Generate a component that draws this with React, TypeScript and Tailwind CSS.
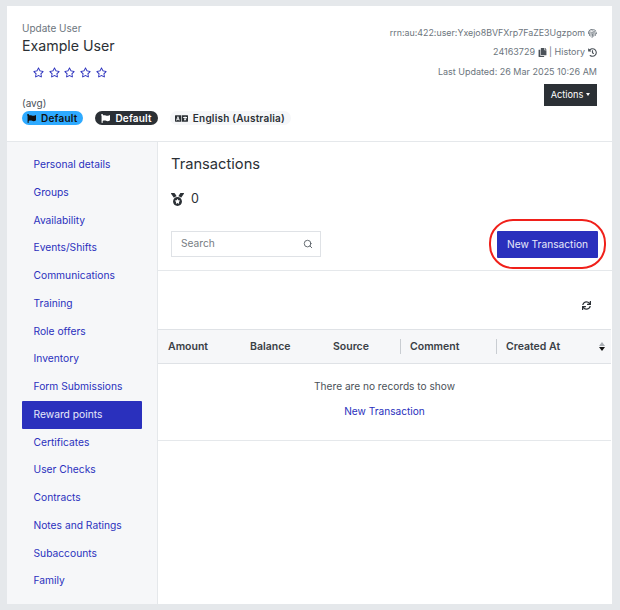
import {
  FaCopy,
  FaFingerprint,
  FaFlag,
  FaHistory,
  FaLanguage,
  FaMedal,
  FaRegStar,
  FaSync,
} from "react-icons/fa";
import { Search } from "lucide-react";

const navItems = [
  "Personal details",
  "Groups",
  "Availability",
  "Events/Shifts",
  "Communications",
  "Training",
  "Role offers",
  "Inventory",
  "Form Submissions",
  "Reward points",
  "Certificates",
  "User Checks",
  "Contracts",
  "Notes and Ratings",
  "Subaccounts",
  "Family",
];

function Header() {
  return (
    <header className="flex h-[136px] justify-between border-b border-[#e5e8eb] pl-[15px] pr-[15px]">
      <div className="flex flex-col">
        <div className="mt-[15px] text-[10px] leading-[14px] text-[#6c757d]">Update User</div>
        <div className="mt-[1px] text-[14.2px] leading-[20px] text-[#2b3035]">Example User</div>
        <div className="ml-[11px] mt-[11px] flex gap-[4.7px] text-[11px] leading-[18px] text-[#2a30bd]">
          <FaRegStar />
          <FaRegStar />
          <FaRegStar />
          <FaRegStar />
          <FaRegStar />
        </div>
        <div className="mt-[19px] text-[10px] leading-[13px] text-[#4b5259]">(avg)</div>
        <div className="mt-[1px] flex items-center gap-[12px] text-[10px] font-semibold leading-[14px] tracking-[0.2px]">
          <span className="flex items-center gap-[5px] rounded-full bg-[#2eaaff] pl-[5px] pr-[6px] text-[#111]">
            <FaFlag className="text-[9px]" />
            Default
          </span>
          <span className="flex items-center gap-[5px] rounded-full bg-[#2b3035] pl-[6px] pr-[6px] text-white">
            <FaFlag className="text-[9px]" />
            Default
          </span>
          <span className="flex items-center gap-[5px] rounded-full bg-[#f6f7f9] pl-[5px] pr-[6px] text-[#2b3035]">
            <FaLanguage className="text-[13px]" />
            English (Australia)
          </span>
        </div>
      </div>
      <div className="flex flex-col items-end text-[9px] text-[#6c757d]">
        <div className="mt-[21px] flex items-center gap-[3px] text-[8.87px] leading-[12px]">
          rrn:au:422:user:Yxejo8BVFXrp7FaZE3Ugzpom
          <FaFingerprint className="text-[9px]" />
        </div>
        <div className="mt-[7px] flex items-center leading-[12px]">
          24163729
          <FaCopy className="ml-[3px] text-[9px] text-[#4b5259]" />
          <span className="ml-[2px]">| History</span>
          <FaHistory className="ml-[3px] text-[9px] text-[#4b5259]" />
        </div>
        <div className="mt-[8px] leading-[12px]">Last Updated: 26 Mar 2025 10:26 AM</div>
        <button className="mt-[6px] flex h-[22px] w-[53px] items-center justify-center gap-[3px] bg-[#2b3035] text-[9.2px] text-white">
          Actions
          <span className="mt-[-1px] h-0 w-0 border-x-[2.5px] border-t-[3px] border-x-transparent border-t-white" />
        </button>
      </div>
    </header>
  );
}

function Sidebar() {
  return (
    <nav className="flex w-[151px] shrink-0 flex-col border-r border-[#e5e8eb] bg-[#f6f7f9] pl-[15px] pr-[15px] pt-[9px]">
      {navItems.map((item) =>
        item === "Reward points" ? (
          <div
            key={item}
            className="flex h-[27.75px] items-center rounded-[1px] bg-[#2a30bd] pl-[11.5px] text-[10.25px] text-[#e8e9fa]"
          >
            {item}
          </div>
        ) : (
          <a key={item} className="flex h-[27.75px] items-center pl-[11.5px] text-[10.25px] text-[#2a30bd]">
            {item}
          </a>
        ),
      )}
    </nav>
  );
}

function Transactions() {
  return (
    <main className="min-w-0 flex-1">
      <section className="h-[129px] border-b border-[#e5e8eb] pl-[13px] pr-[14px]">
        <h2 className="pt-[12px] text-[14.7px] leading-[20px] text-[#2b3035]">Transactions</h2>
        <div className="mt-[17px] flex items-center gap-[7px] text-[12.5px] leading-[16px] text-[#2b3035]">
          <FaMedal className="text-[13px]" />0
        </div>
        <div className="mt-[23px] flex items-center justify-between">
          <div className="flex h-[26px] w-[150px] items-center justify-between border border-[#dfe2e6] pl-[9px] pr-[7px] text-[10.2px] text-[#767c83]">
            Search
            <Search size={10} strokeWidth={2} className="text-[#4b5259]" />
          </div>
          <div className="relative">
            <button className="h-[27px] w-[101px] rounded-[1px] bg-[#2a30bd] text-[10.2px] text-[#e8e9fa]">
              New Transaction
            </button>
            <span className="absolute inset-x-[-8px] inset-y-[-11px] rounded-[24px] border-2 border-[#f0201a]" />
          </div>
        </div>
      </section>
      <section className="mr-[1px] h-[170px] border-b border-[#e5e8eb]">
        <div className="flex h-[58px] items-center justify-end pr-[20px] pt-[10px] text-[9px] text-[#2b3035]">
          <FaSync />
        </div>
        <div className="flex h-[35px] items-center border-y border-[#dfe2e6] bg-[#f6f7f9] text-[10.5px] font-semibold text-[#3a4046]">
          <span className="w-[83px] pl-[10px]">Amount</span>
          <span className="w-[83px] pl-[9px]">Balance</span>
          <span className="w-[76px] pl-[9px]">Source</span>
          <span className="w-[96px] border-l border-[#c9cdd2] pl-[9px]">Comment</span>
          <span className="flex-1 border-l border-[#c9cdd2] pl-[9px]">Created At</span>
          <span className="mr-[6px] flex flex-col items-center gap-[1px]">
            <span className="h-0 w-0 border-x-[3px] border-b-[4px] border-x-transparent border-b-[#a8adb3]" />
            <span className="h-0 w-0 border-x-[3px] border-t-[4px] border-x-transparent border-t-[#111]" />
          </span>
        </div>
        <div className="pt-[15px] text-center text-[10.15px] leading-[14px] text-[#4b5259]">
          There are no records to show
          <div className="mt-[11px] text-[#2a30bd]">New Transaction</div>
        </div>
      </section>
    </main>
  );
}

export default function App() {
  return (
    <div className="h-[610px] w-[620px] bg-[#e5e8eb] pl-[7px] pr-[8px] pt-[6px] font-['Inter',sans-serif]">
      <div className="flex h-[598px] flex-col bg-white">
        <Header />
        <div className="flex min-h-0 flex-1">
          <Sidebar />
          <Transactions />
        </div>
      </div>
    </div>
  );
}
